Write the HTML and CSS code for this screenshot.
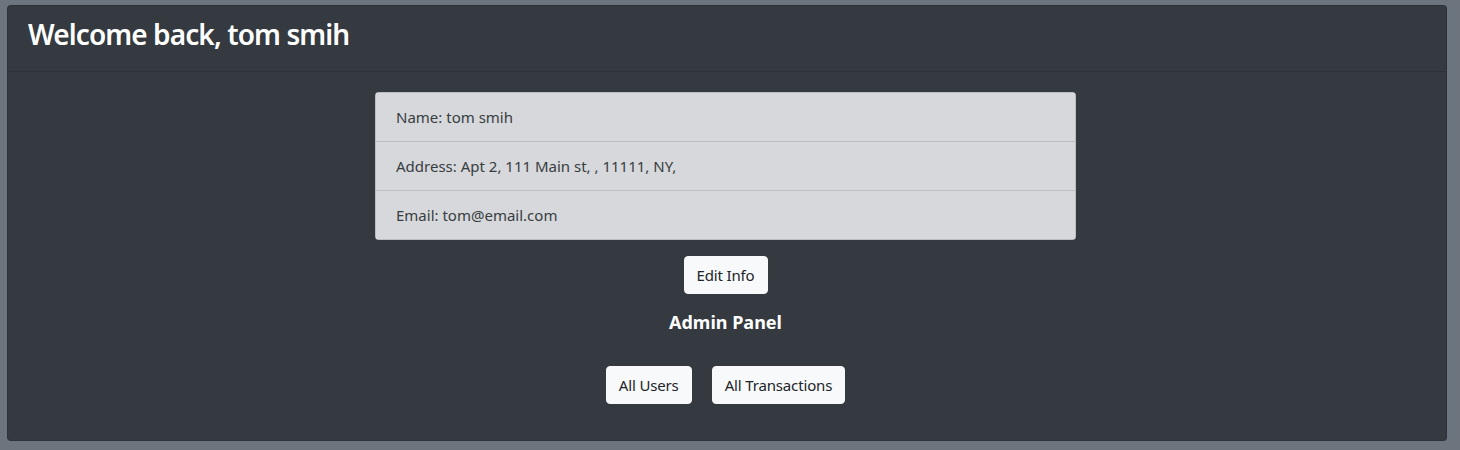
FILE: index.html
```html
<!DOCTYPE html>
<html lang="en">
<head>
<meta charset="utf-8">
<title>Profile</title>
<link rel="stylesheet" href="styles.css">
</head>
<body>
<div class="page">
  <div class="card">
    <div class="card-header">
      <h3 class="title">Welcome back, tom smih</h3>
    </div>
    <div class="card-body">
      <ul class="info-list">
        <li class="info-item">Name: tom smih</li>
        <li class="info-item">Address: Apt 2, 111 Main st, , 11111, NY,</li>
        <li class="info-item">Email: tom@email.com</li>
      </ul>
      <div class="edit-row">
        <button class="btn">Edit Info</button>
      </div>
      <h5 class="admin-title">Admin Panel</h5>
      <div class="admin-row">
        <button class="btn">All Users</button>
        <button class="btn">All Transactions</button>
      </div>
    </div>
  </div>
</div>
</body>
</html>
```
FILE: styles.css
```css
* { box-sizing: border-box; }
html, body { margin: 0; height: 100%; }
body {
  background: #6c757d;
  font-family: "Noto Sans", "Open Sans", sans-serif;
  font-size: 16px;
  line-height: 1.5;
  color: #212529;
}
.page {
  padding: 5px 13px 9px 7px;
}
.card {
  background: #343a40;
  border: 1px solid rgba(0,0,0,.125);
  border-radius: 4px;
  color: #fff;
}
.card-header {
  padding: 12px 20px;
  border-bottom: 1px solid rgba(0,0,0,.125);
}
.title {
  margin: 0 0 8px;
  font-size: 28px;
  line-height: 33px;
  font-weight: 600;
  letter-spacing: -0.9px;
}
.card-body {
  padding: 20px 23px 20px 20px;
  text-align: center;
}
.info-list {
  list-style: none;
  margin: 0 auto;
  padding: 0;
  width: 701px;
  text-align: left;
  border-radius: 4px;
  overflow: hidden;
}
.info-item {
  background: #d6d8db;
  color: #383d41;
  padding: 12px 20px;
  border: 1px solid rgba(0,0,0,.125);
  font-size: 15px;
  line-height: 24px;
}
.info-item + .info-item { border-top: 0; }
.edit-row { margin: 16px 0; }
.btn {
  font-family: inherit;
  font-size: 15px;
  line-height: 24px;
  padding: 6px 12px;
  border: 1px solid #f8f9fa;
  background: #f8f9fa;
  color: #212529;
  border-radius: 4px;
  letter-spacing: -0.15px;
}
.admin-title {
  margin: 0 0 32px;
  font-size: 18px;
  line-height: 24px;
  font-weight: 700;
}
.admin-row {
  display: flex;
  justify-content: center;
  gap: 20px;
  margin-bottom: 16px;
}
```
